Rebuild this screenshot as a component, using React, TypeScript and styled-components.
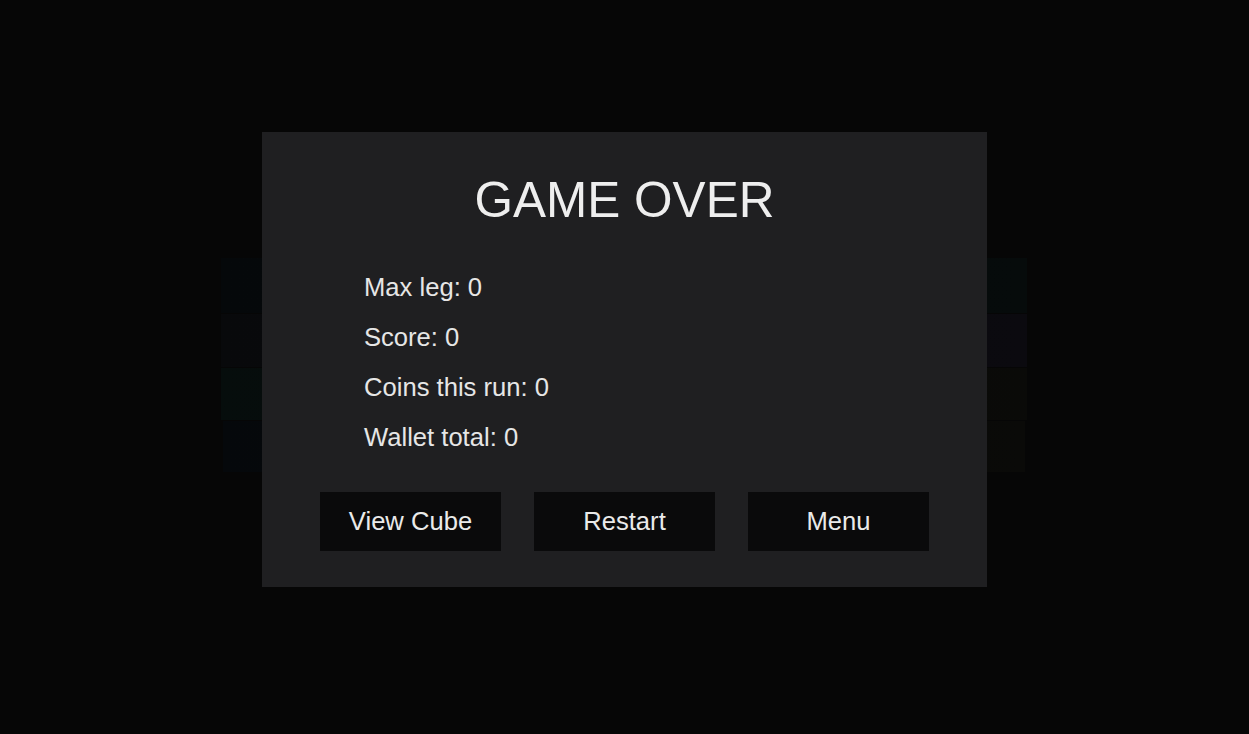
import * as React from "react";
import styled, { createGlobalStyle } from "styled-components";

const GlobalStyle = createGlobalStyle`
  html, body {
    margin: 0;
    padding: 0;
    background: #060606;
    font-family: "Liberation Sans", Arial, sans-serif;
  }
`;

interface BoardRow {
  height: number;
  inset: number;
  from: string;
  to: string;
}

const rows: BoardRow[] = [
  { height: 55, inset: 0, from: "#05080a", to: "#060b0b" },
  { height: 53, inset: 0, from: "#08090b", to: "#0b0a0f" },
  { height: 52, inset: 0, from: "#060d0c", to: "#0a0a08" },
  { height: 51, inset: 2, from: "#05080b", to: "#0a0a08" }
];

const stats = [
  { label: "Max leg", value: 0 },
  { label: "Score", value: 0 },
  { label: "Coins this run", value: 0 },
  { label: "Wallet total", value: 0 }
];

const Page = styled.div`
  position: relative;
  height: 100vh;
  display: flex;
  align-items: center;
  justify-content: center;
  overflow: hidden;
`;

const Board = styled.div`
  width: 806px;
  display: flex;
  flex-direction: column;
  gap: 1px;
  margin: 0 0 4px -1px;
`;

const Row = styled.div<{ $row: BoardRow }>`
  height: ${p => p.$row.height}px;
  margin: 0 ${p => p.$row.inset}px;
  background: linear-gradient(90deg, ${p => p.$row.from}, ${p => p.$row.to});
`;

const Overlay = styled.div`
  position: absolute;
  inset: 0;
  display: flex;
  align-items: center;
  justify-content: center;
  padding-bottom: 15px;
  box-sizing: border-box;
`;

const Modal = styled.div`
  width: 725px;
  box-sizing: border-box;
  background: #1f1f21;
  padding: 38px 0 36px;
  display: flex;
  flex-direction: column;
  align-items: center;
`;

const Title = styled.h1`
  margin: 0;
  font-size: 49.5px;
  line-height: 60px;
  font-weight: normal;
  color: #eeeeee;
`;

const StatList = styled.div`
  align-self: stretch;
  margin-top: 32px;
  padding-left: 102px;
  display: flex;
  flex-direction: column;
`;

const Stat = styled.div`
  font-size: 25.6px;
  line-height: 50px;
  color: #e6e6e6;
`;

const Actions = styled.div`
  margin-top: 30px;
  display: flex;
  gap: 33px;
`;

const Button = styled.button.attrs({ type: "button" })`
  width: 181px;
  height: 59px;
  border: 0;
  padding: 0;
  background: #0a0a0b;
  color: #eaeaea;
  font: inherit;
  font-size: 25.6px;
  cursor: pointer;
  outline: none;

  &:hover {
    background: #141416;
  }
`;

export default function App() {
  return (
    <>
      <GlobalStyle />
      <Page>
        <Board>
          {rows.map((row, i) => (
            <Row key={i} $row={row} />
          ))}
        </Board>
        <Overlay>
          <Modal>
            <Title>GAME OVER</Title>
            <StatList>
              {stats.map(s => (
                <Stat key={s.label}>
                  {s.label}: {s.value}
                </Stat>
              ))}
            </StatList>
            <Actions>
              <Button>View Cube</Button>
              <Button>Restart</Button>
              <Button>Menu</Button>
            </Actions>
          </Modal>
        </Overlay>
      </Page>
    </>
  );
}
